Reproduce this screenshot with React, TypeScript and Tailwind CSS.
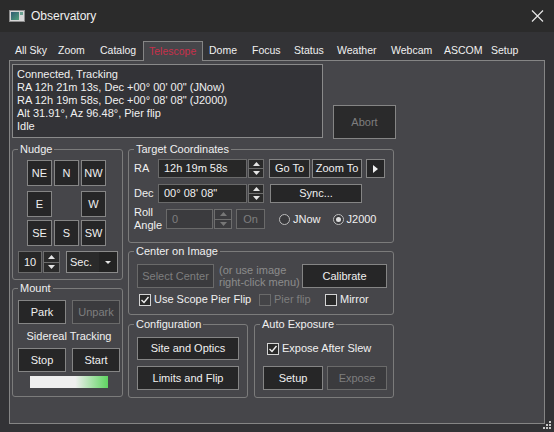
import React from 'react';

const TABS: [string, string][] = [
  ['All Sky', 'w-[43px]'],
  ['Zoom', 'w-[42px]'],
  ['Catalog', 'w-[49px]'],
  ['Telescope', 'w-[60px]'],
  ['Dome', 'w-[43px]'],
  ['Focus', 'w-[42px]'],
  ['Status', 'w-[43px]'],
  ['Weather', 'w-[54px]'],
  ['Webcam', 'w-[53px]'],
  ['ASCOM', 'w-[47px]'],
  ['Setup', 'w-[46px]'],
];

const STATUS_LINES = [
  'Connected, Tracking',
  'RA 12h 21m 13s, Dec +00\u00b0 00\' 00" (JNow)',
  'RA 12h 19m 58s, Dec +00\u00b0 08\' 08" (J2000)',
  'Alt 31.91\u00b0, Az 96.48\u00b0, Pier flip',
  'Idle',
];

type Variant = 'normal' | 'disabled' | 'dim';

const VARIANTS: Record<Variant, string> = {
  normal: 'border-[#858585] bg-[#262627] text-[#f0f0f0]',
  disabled: 'border-[#6a6a6a] bg-[#3b3b3e] text-[#7e7e7e]',
  dim: 'border-[#858585] bg-[#2a2a2b] text-[#7e7e7e]',
};

function Btn({ className = '', variant = 'normal', children }: { className?: string; variant?: Variant; children: React.ReactNode }) {
  return (
    <div className={`flex shrink-0 items-center justify-center border ${VARIANTS[variant]} ${className}`}>
      {children}
    </div>
  );
}

function Group({ title, className = '', children }: { title: string; className?: string; children?: React.ReactNode }) {
  return (
    <div className={`shrink-0 rounded-[3px] border border-[#7b7b7b] ${className}`}>
      <div className="-mt-[7px] ml-[5px] w-fit bg-[#46464a] px-[2px] leading-[13px]">{title}</div>
      {children}
    </div>
  );
}

function Spinner({ className = '', disabled }: { className?: string; disabled?: boolean }) {
  const c = disabled ? '#777' : '#e4e4e4';
  return (
    <div className={`flex shrink-0 flex-col border border-[#6e6e6e] ${disabled ? 'bg-[#3b3b3e]' : 'bg-[#2a2a2a]'} ${className}`}>
      <div className="flex flex-1 items-center justify-center border-b border-[#6e6e6e]">
        <svg width="7" height="4" viewBox="0 0 7 4">
          <path d="M0 4 L3.5 0 L7 4Z" fill={c} />
        </svg>
      </div>
      <div className="flex flex-1 items-center justify-center">
        <svg width="7" height="4" viewBox="0 0 7 4">
          <path d="M0 0 L3.5 4 L7 0Z" fill={c} />
        </svg>
      </div>
    </div>
  );
}

function TextBox({ className = '', disabled, children }: { className?: string; disabled?: boolean; children: React.ReactNode }) {
  return (
    <div
      className={`flex shrink-0 items-center border pl-[5px] ${
        disabled ? 'border-[#6a6a6a] bg-[#3b3b3e] text-[#7e7e7e]' : 'border-[#6a6a6a] bg-[#272727] text-[#f0f0f0]'
      } ${className}`}
    >
      {children}
    </div>
  );
}

function Check({ label, checked, disabled, className = '' }: { label: string; checked?: boolean; disabled?: boolean; className?: string }) {
  return (
    <div className={`flex shrink-0 items-center ${disabled ? 'text-[#7e7e7e]' : ''} ${className}`}>
      <div
        className={`flex h-[12px] w-[12px] items-center justify-center border ${
          disabled ? 'border-[#6a6a6a] bg-[#444447]' : 'border-[#d4d4d4] bg-[#2a2a2a]'
        }`}
      >
        {checked && (
          <svg width="10" height="10" viewBox="0 0 10 10">
            <path d="M1.5 5 L4 7.5 L8.5 2" fill="none" stroke="#f0f0f0" strokeWidth="1.4" />
          </svg>
        )}
      </div>
      <span className="ml-[3px] leading-[13px]">{label}</span>
    </div>
  );
}

function Radio({ label, checked, className = '' }: { label: string; checked?: boolean; className?: string }) {
  return (
    <div className={`flex shrink-0 items-center ${className}`}>
      <div className="flex h-[11px] w-[11px] items-center justify-center rounded-full border border-[#bdbdbd] bg-[#3a3a3d]">
        {checked && <div className="h-[5px] w-[5px] rounded-full bg-[#e0e0e0]" />}
      </div>
      <span className="ml-[3px]">{label}</span>
    </div>
  );
}

function TitleBar() {
  return (
    <div className="flex h-[32px] shrink-0 items-center bg-[#2b2b2b] pl-[9px] pr-[10px]">
      <svg width="16" height="12" viewBox="0 0 16 12">
        <defs>
          <linearGradient id="ico" x1="0" y1="0" x2="1" y2="1">
            <stop offset="0" stopColor="#2f5b72" />
            <stop offset="1" stopColor="#52a07c" />
          </linearGradient>
        </defs>
        <rect x="0.5" y="0.5" width="15" height="11" fill="#d8d8d8" stroke="#8c8c8c" />
        <rect x="2" y="2" width="8" height="8" fill="url(#ico)" />
        <rect x="11" y="2" width="3" height="3" fill="#6aa090" />
      </svg>
      <span className="ml-[6px] text-[12px] text-[#f0f0f0]">Observatory</span>
      <svg className="ml-auto" width="13" height="12" viewBox="0 0 13 12">
        <path d="M1 0.5 L12 11.5 M12 0.5 L1 11.5" stroke="#e6e6e6" strokeWidth="1.2" />
      </svg>
    </div>
  );
}

function Tabs() {
  return (
    <div className="flex h-[19px] text-[10.5px]">
      {TABS.map(([name, w]) =>
        name === 'Telescope' ? (
          <div
            key={name}
            className={`relative z-10 -mb-[1px] flex h-[20px] shrink-0 items-center border border-b-0 border-[#858585] bg-[#46464a] pl-[5px] text-[#c8304a] ${w}`}
          >
            {name}
          </div>
        ) : (
          <div key={name} className={`flex h-[19px] shrink-0 items-center pl-[6px] ${w}`}>
            {name}
          </div>
        ),
      )}
    </div>
  );
}

function RightArrow() {
  return (
    <svg width="5" height="8" viewBox="0 0 5 8">
      <path d="M0 0 L5 4 L0 8Z" fill="#f0f0f0" />
    </svg>
  );
}

function Page() {
  return (
    <div className="h-[364px] w-[536px] border border-[#858585] bg-[#46464a] pl-[2px] pt-[3px]">
      <div className="flex h-[75px] items-end">
        <div className="h-[74px] w-[311px] self-start border border-[#8a8a8a] bg-[#333337] pl-[4px] pt-[3px] leading-[13px]">
          {STATUS_LINES.map(l => (
            <div key={l}>{l}</div>
          ))}
        </div>
        <Btn variant="dim" className="ml-[10px] h-[34px] w-[63px]">
          Abort
        </Btn>
      </div>

      <div className="mt-[10px] flex gap-[5px]">
        {/* left column */}
        <div className="flex w-[111px] flex-col gap-[8px]">
          <Group title="Nudge" className="h-[131px] w-[111px]">
            <div className="mt-[4px] flex gap-[2px] pl-[14px]">
              <Btn className="h-[26px] w-[25px]">NE</Btn>
              <Btn className="h-[26px] w-[25px]">N</Btn>
              <Btn className="h-[26px] w-[25px]">NW</Btn>
            </div>
            <div className="mt-[5px] flex gap-[29px] pl-[14px]">
              <Btn className="h-[26px] w-[25px]">E</Btn>
              <Btn className="h-[26px] w-[25px]">W</Btn>
            </div>
            <div className="mt-[3px] flex gap-[2px] pl-[14px]">
              <Btn className="h-[26px] w-[25px]">SE</Btn>
              <Btn className="h-[26px] w-[25px]">S</Btn>
              <Btn className="h-[26px] w-[25px]">SW</Btn>
            </div>
            <div className="mt-[5px] flex pl-[5px]">
              <TextBox className="h-[22px] w-[24px]">10</TextBox>
              <Spinner className="ml-[1px] h-[22px] w-[17px]" />
              <div className="ml-[6px] flex h-[22px] w-[52px] shrink-0 border border-[#8a8a8a] bg-[#2a2a2a]">
                <div className="flex flex-1 items-center pl-[3px]">Sec.</div>
                <div className="flex w-[18px] items-center justify-center bg-[#232323]">
                  <svg width="6" height="3" viewBox="0 0 6 3">
                    <path d="M0 0 L3 3 L6 0Z" fill="#e4e4e4" />
                  </svg>
                </div>
              </div>
            </div>
          </Group>

          <Group title="Mount" className="h-[109px] w-[111px]">
            <div className="mt-[5px] flex gap-[6px] pl-[5px]">
              <Btn className="h-[24px] w-[48px]">Park</Btn>
              <Btn variant="disabled" className="h-[24px] w-[48px]">
                Unpark
              </Btn>
            </div>
            <div className="ml-[5px] mt-[6px] w-[102px] text-center leading-[13px]">Sidereal Tracking</div>
            <div className="mt-[5px] flex gap-[6px] pl-[5px]">
              <Btn className="h-[24px] w-[48px]">Stop</Btn>
              <Btn className="h-[24px] w-[48px]">Start</Btn>
            </div>
            <div className="ml-[17px] mt-[4px] h-[12px] w-[78px] bg-[linear-gradient(90deg,#eeeeee_58%,#5fd461_100%)]" />
          </Group>
        </div>

        {/* right column */}
        <div className="flex w-[266px] flex-col">
          <Group title="Target Coordinates" className="h-[94px] w-[266px]">
            <div className="mt-[3px] flex h-[19px] items-center pl-[5px]">
              <span className="w-[24px] shrink-0">RA</span>
              <TextBox className="h-[19px] w-[89px]">12h 19m 58s</TextBox>
              <Spinner className="ml-[1px] h-[19px] w-[16px]" />
              <Btn className="ml-[5px] h-[19px] w-[41px]">Go To</Btn>
              <Btn className="ml-[2px] h-[19px] w-[50px]">Zoom To</Btn>
              <Btn className="ml-[4px] h-[19px] w-[19px]">
                <RightArrow />
              </Btn>
            </div>
            <div className="mt-[6px] flex h-[19px] items-center pl-[5px]">
              <span className="w-[24px] shrink-0">Dec</span>
              <TextBox className="h-[19px] w-[89px]">{'00\u00b0 08\' 08"'}</TextBox>
              <Spinner className="ml-[1px] h-[19px] w-[16px]" />
              <Btn className="ml-[6px] h-[19px] w-[92px]">Sync...</Btn>
            </div>
            <div className="mt-[6px] flex h-[20px] items-center pl-[5px]">
              <div className="w-[32px] shrink-0 leading-[13px]">
                Roll
                <br />
                Angle
              </div>
              <TextBox disabled className="h-[20px] w-[47px]">
                0
              </TextBox>
              <Spinner disabled className="ml-[1px] h-[20px] w-[18px]" />
              <Btn variant="disabled" className="ml-[4px] h-[20px] w-[29px]">
                On
              </Btn>
              <Radio label="JNow" className="ml-[14px]" />
              <Radio label="J2000" checked className="ml-[12px]" />
            </div>
          </Group>

          <Group title="Center on Image" className="mt-[8px] h-[64px] w-[266px]">
            <div className="mt-[6px] flex pl-[8px]">
              <Btn variant="disabled" className="h-[24px] w-[77px]">
                Select Center
              </Btn>
              <div className="ml-[5px] flex h-[24px] w-[83px] shrink-0 flex-col justify-center leading-[12px] text-[#8c8c8c]">
                <span>(or use image</span>
                <span>right-click menu)</span>
              </div>
              <Btn className="h-[24px] w-[85px]">Calibrate</Btn>
            </div>
            <div className="mt-[5px] flex h-[13px] items-center pl-[10px]">
              <Check label="Use Scope Pier Flip" checked className="w-[120px]" />
              <Check label="Pier flip" disabled className="w-[66px]" />
              <Check label="Mirror" />
            </div>
          </Group>

          <div className="mt-[9px] flex gap-[6px]">
            <Group title="Configuration" className="h-[74px] w-[120px]">
              <div className="mt-[6px] pl-[8px]">
                <Btn className="h-[23px] w-[102px]">Site and Optics</Btn>
              </div>
              <div className="mt-[6px] pl-[8px]">
                <Btn className="h-[24px] w-[102px]">Limits and Flip</Btn>
              </div>
            </Group>
            <Group title="Auto Exposure" className="h-[74px] w-[140px]">
              <div className="mt-[11px] flex h-[13px] items-center pl-[12px]">
                <Check label="Expose After Slew" checked />
              </div>
              <div className="mt-[11px] flex gap-[4px] pl-[8px]">
                <Btn className="h-[24px] w-[60px]">Setup</Btn>
                <Btn variant="disabled" className="h-[24px] w-[60px]">
                  Expose
                </Btn>
              </div>
            </Group>
          </div>
        </div>
      </div>
    </div>
  );
}

export default function App() {
  return (
    <div className="relative flex h-[432px] w-[554px] flex-col overflow-hidden bg-[#333336] font-['Liberation_Sans',Arial,sans-serif] text-[11px] text-[#f0f0f0] select-none">
      <TitleBar />
      <div className="flex flex-1 flex-col px-[9px] pt-[9px]">
        <Tabs />
        <Page />
      </div>
      <svg className="absolute bottom-[3px] right-[3px]" width="8" height="8" viewBox="0 0 8 8">
        <g fill="#c8c8c8">
          <rect x="6" y="0" width="2" height="2" />
          <rect x="3" y="3" width="2" height="2" />
          <rect x="6" y="3" width="2" height="2" />
          <rect x="0" y="6" width="2" height="2" />
          <rect x="3" y="6" width="2" height="2" />
          <rect x="6" y="6" width="2" height="2" />
        </g>
      </svg>
    </div>
  );
}
